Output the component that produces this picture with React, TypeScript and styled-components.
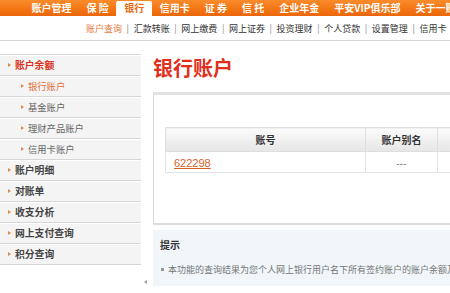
import React from "react";
import styled, { createGlobalStyle } from "styled-components";

const GlobalStyle = createGlobalStyle`
  html, body { margin: 0; padding: 0; background: #fff; }
  body { font-family: "Noto Sans CJK SC", "Noto Sans", sans-serif; color: #333; }
  * { box-sizing: border-box; }
`;

const Page = styled.div`
  width: 450px;
  height: 293px;
  overflow: hidden;
  position: relative;
  background: #fff;
`;

const TopBar = styled.div`
  height: 16px;
  background: linear-gradient(#fa8c2c, #f27412 60%, #ea660a);
  display: flex;
  align-items: flex-end;
  padding-left: 24px;
  white-space: nowrap;
`;

const NavItem = styled.div<{ $active?: boolean }>`
  height: ${(p) => (p.$active ? "15px" : "16px")};
  line-height: ${(p) => (p.$active ? "14px" : "15px")};
  padding: 0 ${(p) => (p.$active ? "8px" : "7.5px")};
  font-size: 10px;
  font-weight: 700;
  color: ${(p) => (p.$active ? "#ec6a12" : "#fff")};
  background: ${(p) => (p.$active ? "#fff" : "transparent")};
  border-radius: ${(p) => (p.$active ? "2px 2px 0 0" : "0")};
  flex-shrink: 0;
`;

const SubNav = styled.div`
  height: 25px;
  border-bottom: 1px solid #d4d4d4;
  display: flex;
  align-items: center;
  padding-left: 86px;
  white-space: nowrap;
  font-size: 9px;
`;

const SubItem = styled.span<{ $active?: boolean }>`
  color: ${(p) => (p.$active ? "#e87a3e" : "#333")};
`;

const Sep = styled.span`
  color: #888;
  padding: 0 4.6px;
`;

const Main = styled.div`
  display: flex;
  margin-top: 13px;
`;

const Sidebar = styled.div`
  width: 141px;
  flex-shrink: 0;
  border-top: 1px solid #d8d8d8;
`;

const SideRow = styled.div<{ $sub?: boolean }>`
  height: 21px;
  display: flex;
  align-items: center;
  padding-left: ${(p) => (p.$sub ? "21px" : "8px")};
  background: #f4f4f4;
  border-bottom: 1px solid #d6d6d6;
  box-shadow: inset 0 1px 0 #fff;
`;

const Arrow = styled.span`
  width: 0;
  height: 0;
  border-top: 2.5px solid transparent;
  border-bottom: 2.5px solid transparent;
  border-left: 3px solid #e0884c;
  margin-right: 4px;
  flex-shrink: 0;
`;

const SideText = styled.span<{ $tone: "red" | "orange" | "gray" | "dark" }>`
  font-size: ${(p) => (p.$tone === "orange" || p.$tone === "gray" ? "9.3px" : "9.8px")};
  font-weight: ${(p) => (p.$tone === "red" || p.$tone === "dark" ? 700 : 400)};
  color: ${(p) =>
    p.$tone === "red"
      ? "#d9331c"
      : p.$tone === "orange"
      ? "#e2703a"
      : p.$tone === "gray"
      ? "#666"
      : "#444"};
  white-space: nowrap;
`;

const Splitter = styled.div`
  width: 12px;
  flex-shrink: 0;
  position: relative;
`;

const CollapseMark = styled.span`
  position: absolute;
  left: 3px;
  top: 226px;
  width: 0;
  height: 0;
  border-top: 2.5px solid transparent;
  border-bottom: 2.5px solid transparent;
  border-right: 3px solid #999;
`;

const Content = styled.div`
  width: 420px;
  flex-shrink: 0;
`;

const Title = styled.h1`
  margin: 0 0 10px 0;
  height: 28px;
  line-height: 28px;
  font-size: 20px;
  font-weight: 700;
  color: #e0301c;
`;

const Panel = styled.div`
  border: 1px solid #dadada;
  border-top: 3px solid #e2e2e2;
  border-bottom: 2px solid #dcdcdc;
  background: #fff;
  padding: 32px 0 50px 11px;
`;

const Table = styled.table`
  border-collapse: collapse;
  width: 420px;
  table-layout: fixed;
`;

const Th = styled.th<{ $w?: number }>`
  width: ${(p) => (p.$w ? `${p.$w}px` : "auto")};
  height: 24px;
  border: 1px solid #dedede;
  background: linear-gradient(#fbfbfb, #e6e6e6);
  font-size: 10px;
  font-weight: 700;
  color: #333;
  text-align: center;
  padding: 0;
`;

const Td = styled.td<{ $align?: string }>`
  height: 21px;
  border: 1px solid #e4e4e4;
  border-top: none;
  text-align: ${(p) => p.$align || "center"};
  font-size: 10px;
  color: #666;
  padding: ${(p) => (p.$align === "left" ? "0 0 0 8px" : "0")};
`;

const AccountLink = styled.a`
  font-family: "Liberation Sans", Arial, sans-serif;
  font-size: 11px;
  color: #d9622b;
  text-decoration: underline;
`;

const Tips = styled.div`
  margin-top: 5px;
  background: #f1f6fa;
  height: 56px;
  padding: 8px 0 0 7px;
`;

const TipsTitle = styled.div`
  font-size: 10px;
  font-weight: 700;
  color: #333;
  line-height: 14px;
`;

const TipsLine = styled.div`
  margin-top: 12px;
  font-size: 9px;
  color: #777;
  white-space: nowrap;
  line-height: 12px;
`;

const Bullet = styled.span`
  display: inline-block;
  width: 3px;
  height: 3px;
  background: #999;
  margin: 0 4px 2px 1px;
  vertical-align: middle;
`;

const navItems = ["账户管理", "保 险", "银行", "信用卡", "证 券", "信 托", "企业年金", "平安VIP俱乐部", "关于一账通"];
const subItems = ["账户查询", "汇款转账", "网上缴费", "网上证券", "投资理财", "个人贷款", "设置管理", "信用卡"];

type Tone = "red" | "orange" | "gray" | "dark";
const sideItems: { label: string; sub?: boolean; tone: Tone }[] = [
  { label: "账户余额", tone: "red" },
  { label: "银行账户", sub: true, tone: "orange" },
  { label: "基金账户", sub: true, tone: "gray" },
  { label: "理财产品账户", sub: true, tone: "gray" },
  { label: "信用卡账户", sub: true, tone: "gray" },
  { label: "账户明细", tone: "dark" },
  { label: "对账单", tone: "dark" },
  { label: "收支分析", tone: "dark" },
  { label: "网上支付查询", tone: "dark" },
  { label: "积分查询", tone: "dark" },
];

export default function App() {
  return (
    <Page>
      <GlobalStyle />
      <TopBar>
        {navItems.map((n) => (
          <NavItem key={n} $active={n === "银行"}>
            {n}
          </NavItem>
        ))}
      </TopBar>
      <SubNav>
        {subItems.map((s, i) => (
          <React.Fragment key={s}>
            {i > 0 && <Sep>|</Sep>}
            <SubItem $active={i === 0}>{s}</SubItem>
          </React.Fragment>
        ))}
      </SubNav>
      <Main>
        <Sidebar>
          {sideItems.map((it) => (
            <SideRow key={it.label} $sub={it.sub}>
              <Arrow />
              <SideText $tone={it.tone}>{it.label}</SideText>
            </SideRow>
          ))}
        </Sidebar>
        <Splitter>
          <CollapseMark />
        </Splitter>
        <Content>
          <Title>银行账户</Title>
          <Panel>
            <Table>
              <thead>
                <tr>
                  <Th $w={200}>账号</Th>
                  <Th $w={72}>账户别名</Th>
                  <Th>余额</Th>
                </tr>
              </thead>
              <tbody>
                <tr>
                  <Td $align="left">
                    <AccountLink href="#">622298</AccountLink>
                  </Td>
                  <Td>---</Td>
                  <Td></Td>
                </tr>
              </tbody>
            </Table>
          </Panel>
          <Tips>
            <TipsTitle>提示</TipsTitle>
            <TipsLine>
              <Bullet />
              本功能的查询结果为您个人网上银行用户名下所有签约账户的账户余额及可用余额。
            </TipsLine>
          </Tips>
        </Content>
      </Main>
    </Page>
  );
}
